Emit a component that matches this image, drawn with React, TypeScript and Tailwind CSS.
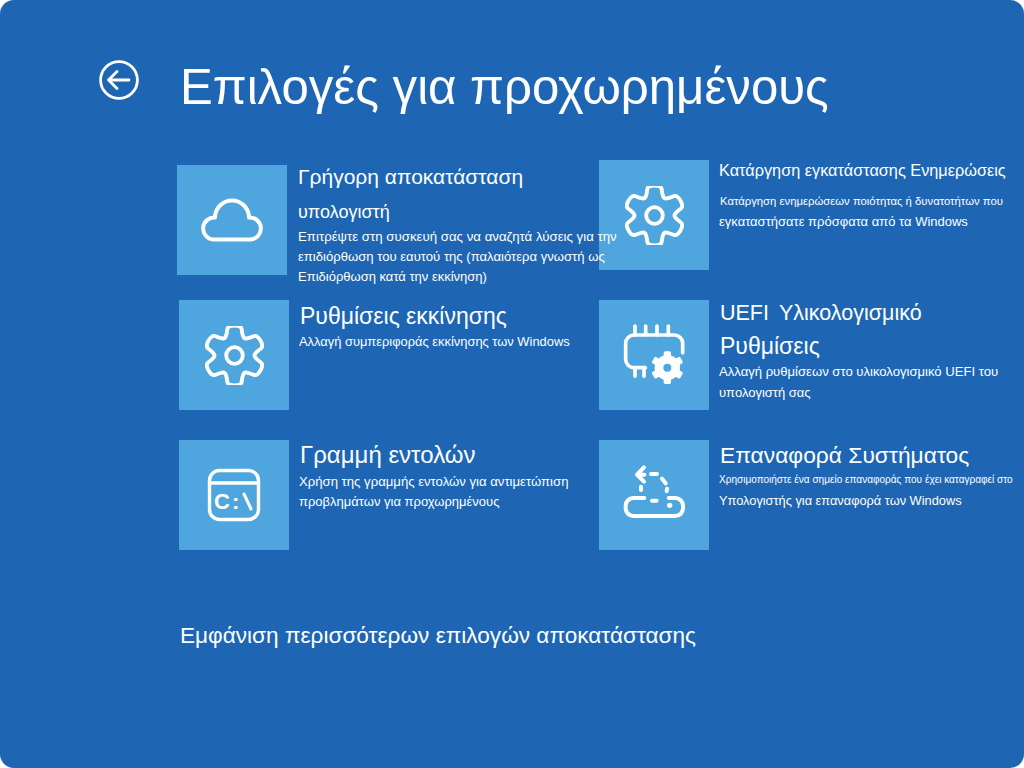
import React from 'react';

function BackIcon() {
  return (
    <svg width="40" height="40" viewBox="0 0 40 40" fill="none" stroke="white" strokeWidth="2.8" strokeLinecap="round" strokeLinejoin="round">
      <circle cx="20" cy="20" r="18.4" />
      <path d="M9.5 20H30M18 11.5 9.5 20l8.5 8.5" />
    </svg>
  );
}

function CloudIcon() {
  return (
    <svg width="65" height="47" viewBox="360 470 195 140" fill="none" stroke="white" strokeWidth="12" strokeLinejoin="round">
      <path d="M400 597H512A33 33 0 0 0 507 531A50 50 0 0 0 405 531A33 33 0 0 0 400 597Z" />
    </svg>
  );
}

// six toothed outline, smoothed through the edge midpoints
function gearPath() {
  const pts: [number, number][] = [];
  for (let k = 0; k < 6; k++) {
    const a = 90 + k * 60;
    [[a - 19, 76], [a - 13, 100], [a + 13, 100], [a + 19, 76], [a + 30, 62]].forEach(([deg, r]) => {
      const rad = (deg * Math.PI) / 180;
      pts.push([r * Math.cos(rad), r * Math.sin(rad)]);
    });
  }
  const mid = (p: [number, number], q: [number, number]) => [(p[0] + q[0]) / 2, (p[1] + q[1]) / 2];
  let d = '';
  pts.forEach((p, i) => {
    const prev = pts[(i + pts.length - 1) % pts.length];
    const next = pts[(i + 1) % pts.length];
    const s = mid(prev, p);
    const e = mid(p, next);
    if (i === 0) d += `M${s[0].toFixed(1)} ${s[1].toFixed(1)}`;
    d += `Q${p[0].toFixed(1)} ${p[1].toFixed(1)} ${e[0].toFixed(1)} ${e[1].toFixed(1)}`;
  });
  return d + 'Z';
}

function GearIcon() {
  return (
    <svg width="59" height="59" viewBox="-96 -96 192 192" fill="none" stroke="white" strokeWidth="12.5" strokeLinejoin="round">
      <path d={gearPath()} />
      <circle cx="0" cy="0" r="27" />
    </svg>
  );
}

function TerminalIcon() {
  return (
    <svg width="54" height="54" viewBox="0 0 54 54" fill="none" stroke="white" strokeWidth="3.4" strokeLinecap="round">
      <rect x="2.5" y="2.5" width="49" height="49" rx="10" />
      <path d="M2.5 15H51.5" />
      <text x="7" y="41" fill="white" stroke="none" fontFamily="'Liberation Sans', sans-serif" fontWeight="700" fontSize="22" letterSpacing="2">C:</text>
      <path d="M37 26l7 15" strokeWidth="3" />
    </svg>
  );
}

function ChipIcon() {
  return (
    <svg width="64" height="64" viewBox="96 99 192 192" fill="none" stroke="white" strokeWidth="11" strokeLinecap="round" strokeLinejoin="round">
      <path d="M278 188V160a25 25 0 0 0-25-25H132a25 25 0 0 0-25 25v48a25 25 0 0 0 25 25h34" />
      <path d="M135 108v27M167 108v27M201 108v27M235 108v27M135 233v26M162 233v26" />
      <g stroke="none" fill="white">
        <circle cx="232" cy="233" r="38" />
        <rect x="221" y="184" width="22" height="98" rx="5" />
        <rect x="221" y="184" width="22" height="98" rx="5" transform="rotate(60 232 233)" />
        <rect x="221" y="184" width="22" height="98" rx="5" transform="rotate(120 232 233)" />
      </g>
      <circle cx="232" cy="233" r="12" fill="#4fa5dd" stroke="none" />
    </svg>
  );
}

function RestoreIcon() {
  return (
    <svg width="64" height="64" viewBox="96 99 192 192" fill="none" stroke="white" strokeWidth="12" strokeLinecap="round" strokeLinejoin="round">
      <path d="M162 112 141 134l21 21M141 134h22" />
      <path d="M183 132h18M216 146l11 14M231 176l-1 8M186 212h14M153 170v10" />
      <path d="M163 204h-33a23 23 0 0 0-23 23v8a23 23 0 0 0 23 23h126a23 23 0 0 0 23-23v-8a23 23 0 0 0-23-23h-20" />
      <circle cx="239" cy="226" r="8" fill="white" stroke="none" />
    </svg>
  );
}

function Tile({ children }: { children: React.ReactNode }) {
  return <div className="flex h-[110px] w-[110px] shrink-0 items-center justify-center bg-[#4fa5dd]">{children}</div>;
}

export default function App() {
  return (
    <div className="h-screen w-full overflow-hidden bg-white font-['Liberation_Sans',sans-serif]">
      <div className="h-[768px] w-[1024px] rounded-[14px] bg-[#1e66b3] text-white">
        {/* Header */}
        <div className="flex pl-[99px] pt-[60px]">
          <BackIcon />
          <h1 className="ml-[41px] h-[56px] whitespace-nowrap text-[49.15px] leading-[54px]">Επιλογές για προχωρημένους</h1>
        </div>

        <div className="flex pl-[177px]">
          {/* Left column */}
          <div className="relative z-10 w-[422px] pt-[49px]">
            <div className="flex h-[110px] gap-[11px]">
              <Tile><CloudIcon /></Tile>
              <div className="whitespace-nowrap">
                <p className="text-[21px] leading-[24px]">Γρήγορη αποκατάσταση</p>
                <p className="mt-[11px] text-[18px] leading-[24px]">υπολογιστή</p>
                <p className="mt-[3px] text-[13.25px] leading-[20px]">Επιτρέψτε στη συσκευή σας να αναζητά λύσεις για την</p>
                <p className="text-[13.1px] leading-[20px]">επιδιόρθωση του εαυτού της (παλαιότερα γνωστή ως</p>
                <p className="text-[13px] leading-[20px]">Επιδιόρθωση κατά την εκκίνηση)</p>
              </div>
            </div>

            <div className="ml-[2px] mt-[25px] flex h-[110px] gap-[10px]">
              <Tile><GearIcon /></Tile>
              <div className="whitespace-nowrap">
                <p className="pl-[1px] text-[23px] leading-[32px]">Ρυθμίσεις εκκίνησης</p>
                <p className="text-[12.9px] leading-[20px]">Αλλαγή συμπεριφοράς εκκίνησης των Windows</p>
              </div>
            </div>

            <div className="ml-[2px] mt-[30px] flex h-[110px] gap-[10px]">
              <Tile><TerminalIcon /></Tile>
              <div className="whitespace-nowrap">
                <p className="pl-[1px] text-[24px] leading-[30px]">Γραμμή εντολών</p>
                <p className="mt-[2px] text-[13.15px] leading-[20px]">Χρήση της γραμμής εντολών για αντιμετώπιση</p>
                <p className="text-[13px] leading-[20px]">προβλημάτων για προχωρημένους</p>
              </div>
            </div>
          </div>

          {/* Right column */}
          <div className="pt-[44px]">
            <div className="flex h-[110px] gap-[10px]">
              <Tile><GearIcon /></Tile>
              <div className="whitespace-nowrap">
                <p className="text-[16.3px] leading-[20px]">Κατάργηση εγκατάστασης Ενημερώσεις</p>
                <p className="mt-[11px] pl-[1px] text-[11.3px] leading-[20px]">Κατάργηση ενημερώσεων ποιότητας ή δυνατοτήτων που</p>
                <p className="mt-[1px] text-[13px] leading-[20px]">εγκαταστήσατε πρόσφατα από τα Windows</p>
              </div>
            </div>

            <div className="mt-[30px] flex h-[110px] gap-[10px]">
              <Tile><ChipIcon /></Tile>
              <div className="whitespace-nowrap">
                <p className="pl-[1px] text-[21.5px] leading-[26px] [word-spacing:4px]">UEFI Υλικολογισμικό</p>
                <p className="mt-[7px] pl-[1px] text-[23px] leading-[26px]">Ρυθμίσεις</p>
                <p className="mt-[2px] text-[13.1px] leading-[21px]">Αλλαγή ρυθμίσεων στο υλικολογισμικό UEFI του</p>
                <p className="text-[13px] leading-[21px]">υπολογιστή σας</p>
              </div>
            </div>

            <div className="mt-[30px] flex h-[110px] gap-[10px]">
              <Tile><RestoreIcon /></Tile>
              <div className="whitespace-nowrap">
                <p className="pl-[1px] text-[22.8px] leading-[30px]">Επαναφορά Συστήματος</p>
                <p className="text-[10.05px] leading-[20px]">Χρησιμοποιήστε ένα σημείο επαναφοράς που έχει καταγραφεί στο</p>
                <p className="mt-[1px] text-[12.8px] leading-[20px]">Υπολογιστής για επαναφορά των Windows</p>
              </div>
            </div>
          </div>
        </div>

        <p className="mt-[71px] pl-[180px] text-[22.6px] leading-[30px]">Εμφάνιση περισσότερων επιλογών αποκατάστασης</p>
      </div>
    </div>
  );
}
